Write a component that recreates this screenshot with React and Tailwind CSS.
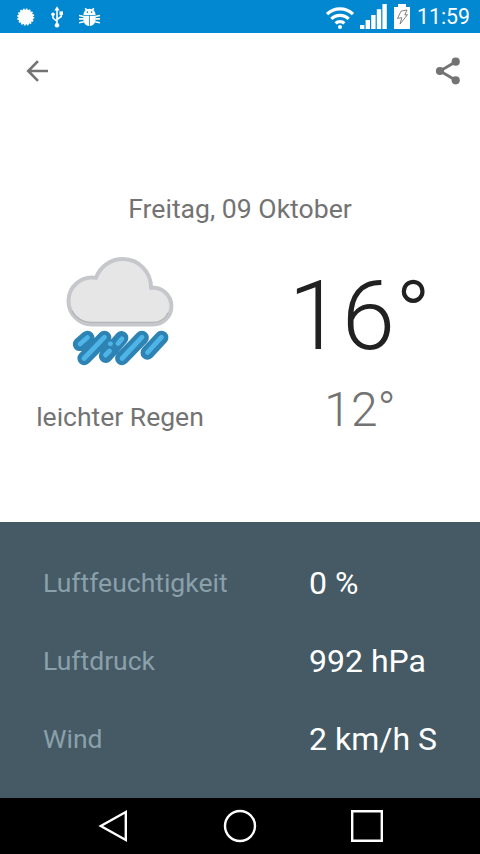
import React from 'react';

const details = [
  { label: 'Luftfeuchtigkeit', value: '0 %' },
  { label: 'Luftdruck', value: '992 hPa' },
  { label: 'Wind', value: '2 km/h S' },
];

function StatusBar() {
  return (
    <header className="h-[33px] bg-[#0288d1] flex items-center justify-between pl-[17px] pr-[10px] text-white">
      <div className="flex items-center gap-4">
        <svg width="18" height="18" viewBox="0 0 18 18" fill="currentColor">
          <circle cx="8.7" cy="9" r="7.6" />
          <circle cx="8.7" cy="9" r="7.8" fill="none" stroke="currentColor" strokeWidth="1.6" strokeDasharray="1.7 1.363" />
        </svg>
        <svg width="12" height="22" viewBox="0 0 12 22" fill="none" stroke="currentColor" strokeWidth="1.6">
          <path d="M6 3v15M2 8.5V12l4 3.5M10.2 7v3.5L6 13.5" />
          <path d="M6 .2 8.6 4.5H3.4z" fill="currentColor" stroke="none" />
          <circle cx="6" cy="19.3" r="2.3" fill="currentColor" stroke="none" />
          <circle cx="2" cy="8.3" r="1.8" fill="currentColor" stroke="none" />
          <path d="M8.5 5.4H12V9H8.5z" fill="currentColor" stroke="none" />
        </svg>
        <svg width="21" height="20" viewBox="0 0 22 20" fill="currentColor">
          <path d="M4.6 7.8a6.4 6.4 0 0 1 12.8 0z" />
          <path d="M4.6 8.6h6v10.8a6.2 6.2 0 0 1-6-6zM11.4 8.6h6v4.8a6.2 6.2 0 0 1-6 6z" />
          <path d="m6.5.8 2 2.5M15.5.8l-2 2.5M0 8.4l5 1M0 12h5M0 16l5-1M22 8.4l-5 1M22 12h-5M22 16l-5-1" fill="none" stroke="currentColor" strokeWidth="1.7" />
          <circle cx="8.8" cy="4.9" r=".8" fill="#0288d1" />
          <circle cx="13.2" cy="4.9" r=".8" fill="#0288d1" />
        </svg>
      </div>
      <div className="flex items-center">
        <svg width="30" height="24" viewBox="0 0 30 24" fill="none" stroke="currentColor" strokeWidth="3.2">
          <path d="M2 9.2a18.4 18.4 0 0 1 26 0M6.3 13.9a12.3 12.3 0 0 1 17.4 0M10.6 18.4a6.2 6.2 0 0 1 8.8 0" />
          <circle cx="15" cy="22" r="2" fill="currentColor" stroke="none" />
        </svg>
        <svg className="ml-[5px]" width="27" height="25" viewBox="0 0 27 25" fill="currentColor">
          <path d="M0 21h4.4v4H0zM5.6 16H10v9H5.6zM11.2 11h4.4v14h-4.4zM16.8 5.3h4.4V25h-4.4zM22.4 0h4.4v25h-4.4z" />
        </svg>
        <svg className="ml-[7px]" width="16" height="25" viewBox="0 0 16 25">
          <path d="M4 0h8v3h4v22H0V3h4z" fill="white" />
          <path d="m7 7.2 6-1.2-2.2 5 2.7-.4L6 20.1l1.8-6.5-4.3.8z" fill="none" stroke="#777" strokeWidth=".9" />
        </svg>
        <span className="ml-[7px] text-[21.3px] leading-none">11:59</span>
      </div>
    </header>
  );
}

function RainIcon() {
  return (
    <svg width="120" height="120" viewBox="60 250 120 120" strokeLinecap="round">
      <path
        d="M92 324.5A23.5 23.5 0 0 1 68.5 301A23.5 23.5 0 0 1 96 277.9A28.3 28.3 0 0 1 123 259.1A28.3 28.3 0 0 1 151 288A18.3 18.3 0 0 1 171.4 306.2A18.3 18.3 0 0 1 153.2 324.5Z"
        fill="#e6e6e7"
        stroke="#c5c7cb"
        strokeWidth="4"
        strokeLinejoin="round"
      />
      {/* shade along the lower rim */}
      <path d="M72 311A21.5 21.5 0 0 0 92 322.3H153.2A16.5 16.5 0 0 0 168 313" fill="none" stroke="#b2b4b6" strokeWidth="1.2" />
      <path
        d="M79.7 344.2 87.5 337.6M84.3 358.3 104.5 337.6M105.8 356 121.5 338M122 358.3 142 337.6M147.4 352.8 161.5 337.6"
        fill="none"
        stroke="#2e83b5"
        strokeWidth="13.8"
      />
      <path
        d="M80 344 87.5 337.5M84 358.5 104.5 337.2M105.5 355 109.5 351M110.3 343.8h.2M118 343.5 122 338.8M122 358.5 142 337.2M147.5 352.5 161.5 337.2"
        fill="none"
        stroke="#4fb4e6"
        strokeWidth="4.8"
      />
    </svg>
  );
}

export default function App() {
  return (
    <div className="w-[480px] h-[854px] flex flex-col overflow-hidden bg-white font-[Roboto,sans-serif]">
      <StatusBar />

      {/* Toolbar */}
      <nav className="h-[75px] flex items-center justify-between pl-[26px] pr-[19px] text-[#737373]">
        <button>
          <svg width="22" height="22" viewBox="0 0 22 22" fill="none" stroke="currentColor" strokeWidth="2.6">
            <path d="M22 11H3M12 1.2 2.2 11l9.8 9.8" />
          </svg>
        </button>
        <button>
          <svg width="26" height="28" viewBox="0 0 26 28" fill="currentColor">
            <path d="M20.7 4.7 5 14l15.7 9.3" fill="none" stroke="currentColor" strokeWidth="2.8" />
            <circle cx="20.7" cy="4.7" r="4.1" />
            <circle cx="5" cy="14" r="4.1" />
            <circle cx="20.7" cy="23.3" r="4.1" />
          </svg>
        </button>
      </nav>

      {/* Current weather */}
      <main className="h-[414px] pt-[85px] text-[#737373]">
        <h1 className="text-center text-[26.6px] leading-[32px]">Freitag, 09 Oktober</h1>
        <div className="grid grid-cols-2 mt-[25px]">
          <div className="flex flex-col items-center">
            <RainIcon />
            <p className="mt-[31px] text-[26.5px] leading-[32px]">leichter Regen</p>
          </div>
          <div className="flex flex-col items-center font-light">
            <p className="mt-[10px] text-[96px] leading-[112px] text-[#212121]">16°</p>
            <p className="mt-[10px] text-[48px] leading-[56px]">12°</p>
          </div>
        </div>
      </main>

      {/* Details */}
      <section className="h-[276px] bg-[#455a64] pt-[22px]">
        {details.map((d) => (
          <div key={d.label} className="h-[78px] flex items-center">
            <span className="w-[266px] ml-[43px] text-[26.5px] text-[#8aa0ab]">{d.label}</span>
            <span className="text-[32px] text-white">{d.value}</span>
          </div>
        ))}
      </section>

      <footer className="h-[56px] bg-black flex items-center justify-between pl-[98px] pr-[96px] text-white">
        <svg width="32" height="34" viewBox="0 0 32 34" fill="none" stroke="currentColor" strokeWidth="2.4">
          <path d="M27.8 3v28L2.8 17z" />
        </svg>
        <svg width="34" height="34" viewBox="0 0 34 34" fill="none" stroke="currentColor" strokeWidth="2.4">
          <circle cx="17" cy="17" r="15" />
        </svg>
        <svg width="34" height="34" viewBox="0 0 34 34" fill="none" stroke="currentColor" strokeWidth="2.4">
          <path d="M2.2 2.2h29.6v29.6H2.2z" />
        </svg>
      </footer>
    </div>
  );
}
